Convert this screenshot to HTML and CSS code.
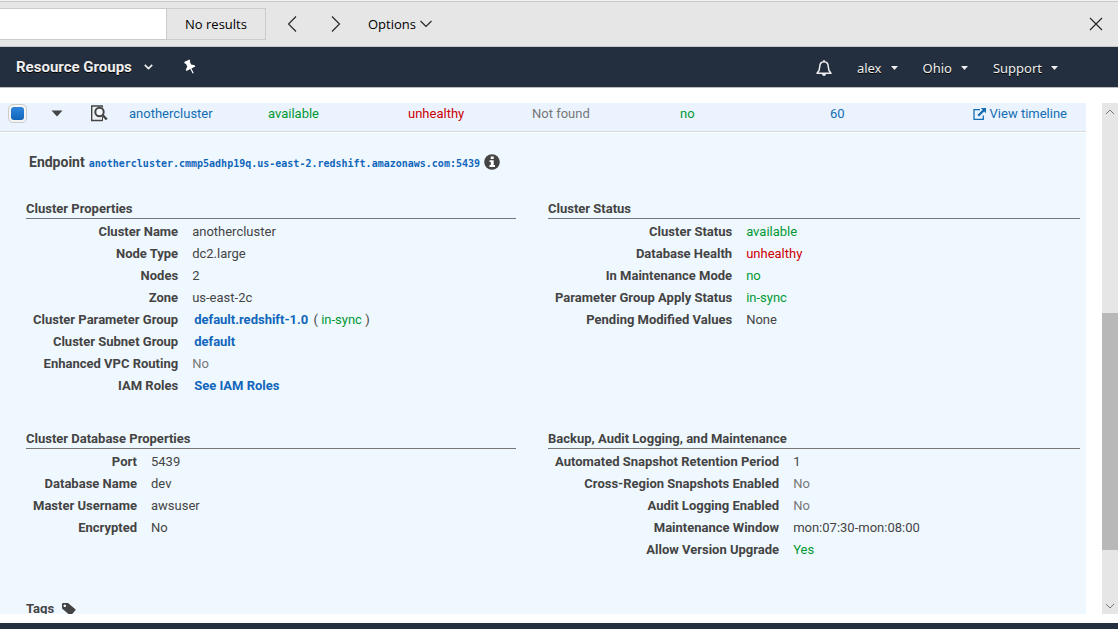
FILE: index.html
```html
<!DOCTYPE html>
<html lang="en">
<head>
<meta charset="utf-8">
<title>Redshift clusters</title>
<link rel="stylesheet" href="styles.css">
</head>
<body>
<form class="findbar" role="search">
  <input class="find-input" type="text" aria-label="Find on page">
  <output class="find-result">No results</output>
  <button class="find-btn find-prev" type="button" aria-label="Previous"><svg width="10" height="18" viewBox="0 0 10 18"><path d="M9 1.5 1.5 9 9 16.5"/></svg></button>
  <button class="find-btn find-next" type="button" aria-label="Next"><svg width="10" height="18" viewBox="0 0 10 18"><path d="M1 1.500 8.500 9 1 16.500"/></svg></button>
  <button class="find-btn find-options" type="button">Options <svg width="12" height="8" viewBox="0 0 12 8"><path d="M.5 1 6 6.500 11.500 1"/></svg></button>
  <button class="find-btn find-close" type="button" aria-label="Close"><svg width="14" height="14" viewBox="0 0 14 14"><path d="m1 1 12 12M13 1 1 13"/></svg></button>
</form>

<nav class="nav">
  <button class="nav-btn nav-groups" type="button">Resource Groups <svg width="9" height="6" viewBox="0 0 9 6"><path d="M.8.8 4.500 4.500 8.200.8" fill="none" stroke="currentColor" stroke-width="1.700"/></svg></button>
  <button class="nav-btn nav-pin" type="button" aria-label="Pin"><svg width="14" height="16" viewBox="0 0 14 16"><path transform="rotate(-27 7 8)" fill="#fff" d="M4 1h6v2H9.200v3.300L12 8.500V10H7.600v5H6.400v-5H2V8.500l2.800-2.200V3H4Z"/></svg></button>
  <span class="nav-space"></span>
  <button class="nav-btn nav-bell" type="button" aria-label="Notifications"><svg width="16" height="18" viewBox="0 0 16 18"><path d="M8 1v1.500M1 14.200c2-1.800 2.700-3.200 2.700-6.200C3.700 4.500 5.200 2.700 8 2.700S12.300 4.500 12.300 8c0 3 .7 4.400 2.700 6.200Z" fill="none" stroke="currentColor" stroke-width="1.500" stroke-linejoin="round"/><path d="M6 15h4c0 2.500-4 2.500-4 0Z" fill="currentColor"/></svg></button>
  <button class="nav-btn" type="button">alex <svg width="7" height="4" viewBox="0 0 7 4"><path d="M0 0h7L3.500 4Z" fill="currentColor"/></svg></button>
  <button class="nav-btn" type="button">Ohio <svg width="7" height="4" viewBox="0 0 7 4"><path d="M0 0h7L3.500 4Z" fill="currentColor"/></svg></button>
  <button class="nav-btn" type="button">Support <svg width="7" height="4" viewBox="0 0 7 4"><path d="M0 0h7L3.500 4Z" fill="currentColor"/></svg></button>
</nav>

<main class="console">
  <div class="content">
    <table class="clusters">
      <colgroup><col class="c-check"><col class="c-icon"><col class="c-icon"><col class="c-name"><col class="c-status"><col class="c-health"><col class="c-found"><col class="c-maint"><col class="c-count"><col></colgroup>
      <tbody>
        <tr>
          <td><input class="check" type="checkbox" checked aria-label="Select anothercluster"></td>
          <td><button class="icon-btn" type="button" aria-label="Collapse"><svg width="12" height="7" viewBox="0 0 12 7"><path d="M.5.5h11L6 6.500Z" fill="#444"/></svg></button></td>
          <td><button class="icon-btn" type="button" aria-label="Inspect"><svg width="18" height="17" viewBox="0 0 18 17"><path d="M12.500 1H1.700v14.500h10.800" fill="#eef2f3" stroke="#444" stroke-width="1.400"/><path d="M12.500.5v2M12.500 12v4" stroke="#444"/><circle cx="9.500" cy="7" r="4.200" fill="#f3f7fa" stroke="#444" stroke-width="2"/><path d="m12.500 10 4.300 4.500" stroke="#444" stroke-width="2.500"/></svg></button></td>
          <td><a href="#">anothercluster</a></td>
          <td class="ok">available</td>
          <td class="bad">unhealthy</td>
          <td class="muted">Not found</td>
          <td class="ok">no</td>
          <td><a href="#">60</a></td>
          <td class="timeline"><a href="#"><svg width="13" height="12" viewBox="0 0 13 12"><path d="M7 1.700H1v9.600h9.300V7.500" fill="none" stroke="currentColor" stroke-width="1.300"/><path d="M7.800 0H13v5.200l-1.800-1.800L6 8.600 4.400 7l5.200-5.200Z" fill="currentColor"/></svg> View timeline</a></td>
        </tr>
      </tbody>
    </table>

    <section class="details">
      <div class="endpoint">
        <strong>Endpoint</strong>
        <a href="#">anothercluster.cmmp5adhp19q.us-east-2.redshift.amazonaws.com:5439</a>
        <svg width="16" height="16" viewBox="0 0 16 16"><circle cx="8" cy="8" r="7.800" fill="#444"/><path d="M6.700 2.500h3v2.400h-3ZM5.500 6.200h4.200v4.900H11V13H5.500v-1.900h1.300V8H5.500Z" fill="#fff"/></svg>
      </div>

      <div class="panels">
        <section>
          <h2>Cluster Properties</h2>
          <dl>
            <dt>Cluster Name</dt><dd>anothercluster</dd>
            <dt>Node Type</dt><dd>dc2.large</dd>
            <dt>Nodes</dt><dd>2</dd>
            <dt>Zone</dt><dd>us-east-2c</dd>
            <dt>Cluster Parameter Group</dt><dd><a href="#">default.redshift-1.0</a> ( <span class="ok">in-sync</span> )</dd>
            <dt>Cluster Subnet Group</dt><dd><a href="#">default</a></dd>
            <dt>Enhanced VPC Routing</dt><dd class="muted">No</dd>
            <dt>IAM Roles</dt><dd><a href="#">See IAM Roles</a></dd>
          </dl>
        </section>
        <section>
          <h2>Cluster Status</h2>
          <dl>
            <dt>Cluster Status</dt><dd class="ok">available</dd>
            <dt>Database Health</dt><dd class="bad">unhealthy</dd>
            <dt>In Maintenance Mode</dt><dd class="ok">no</dd>
            <dt>Parameter Group Apply Status</dt><dd class="ok">in-sync</dd>
            <dt>Pending Modified Values</dt><dd>None</dd>
          </dl>
        </section>
        <section>
          <h2>Cluster Database Properties</h2>
          <dl>
            <dt>Port</dt><dd>5439</dd>
            <dt>Database Name</dt><dd>dev</dd>
            <dt>Master Username</dt><dd>awsuser</dd>
            <dt>Encrypted</dt><dd>No</dd>
          </dl>
        </section>
        <section>
          <h2>Backup, Audit Logging, and Maintenance</h2>
          <dl>
            <dt>Automated Snapshot Retention Period</dt><dd>1</dd>
            <dt>Cross-Region Snapshots Enabled</dt><dd class="muted">No</dd>
            <dt>Audit Logging Enabled</dt><dd class="muted">No</dd>
            <dt>Maintenance Window</dt><dd>mon:07:30-mon:08:00</dd>
            <dt>Allow Version Upgrade</dt><dd class="ok">Yes</dd>
          </dl>
        </section>
      </div>

      <div class="tags"><strong>Tags</strong> <svg width="14" height="13" viewBox="0 0 14 13"><path fill="#444" fill-rule="evenodd" d="M0 1Q0 0 1 0h5l7.400 6.300q.5.500 0 1L9 12.400q-.5.500-1 0L0 5.500ZM2.800 1.500a1.300 1.300 0 1 0 .01 0Z"/></svg></div>
    </section>
  </div>

  <div class="scrollbar" aria-hidden="true">
    <svg width="10" height="6" viewBox="0 0 10 6"><path d="M1 5 5 1l4 4"/></svg>
    <div class="thumb"></div>
    <svg class="down" width="10" height="6" viewBox="0 0 10 6"><path d="m1 1 4 4 4-4"/></svg>
  </div>
</main>
<footer class="footer"></footer>
</body>
</html>
```
FILE: styles.css
```css
* { box-sizing: border-box; }

body {
  margin: 0;
  height: 100vh;
  display: flex;
  flex-direction: column;
  overflow: hidden;
  background: #fff;
  color: #444;
  font: 13px/20px Roboto, sans-serif;
}

svg { display: block; flex: none; }
a { color: #146eb4; text-decoration: none; }
button { padding: 0; border: 0; background: none; color: inherit; font: inherit; }

.ok { color: #093; }
.bad { color: #c00; }
.muted { color: #777; }

/* Find bar */
.findbar {
  display: flex;
  align-items: center;
  height: 47px;
  flex: none;
  border-top: 1px solid #f2f2f2;
  border-bottom: 1px solid #c8c8c8;
  box-shadow: inset 0 1px #c8c8c8;
  background: #e6e6e6;
  color: #000;
  font: 13px/20px "Open Sans", sans-serif;
}
.find-input {
  width: 167px;
  height: 32px;
  border: 1px solid #ccc;
  border-left: 0;
  background: #fff;
}
.find-result {
  width: 99px;
  height: 32px;
  border: 1px solid #ccc;
  border-left: 0;
  line-height: 30px;
  text-align: center;
}
.find-btn { display: flex; align-items: center; gap: 4px; }
.find-btn svg { fill: none; stroke: #222; stroke-width: 1.1; }
.find-prev { margin-left: 21px; }
.find-next { margin-left: 34px; }
.find-options { margin-left: 27px; }
.find-close { margin-left: auto; margin-right: 15px; }

/* Navigation */
.nav {
  display: flex;
  align-items: center;
  height: 41px;
  flex: none;
  padding: 0 60px 0 16px;
  border-bottom: 1px solid #bbb;
  background: #232f3e;
  color: #eee;
  font: 13px/20px "Noto Sans", sans-serif;
}
.nav-btn { display: flex; align-items: center; gap: 9px; margin-left: 25px; padding-top: 2px; text-shadow: 0 1px #000; }
.nav-groups { margin-left: 0; padding-top: 0; gap: 12px; font: bold 15px/20px Roboto, sans-serif; }
.nav-pin { margin-left: 30px; padding-top: 0; }
.nav-space { flex: 1; }

/* Cluster list */
.console {
  display: flex;
  gap: 16px;
  flex: 1;
  min-height: 0;
  padding: 15px 0 9px;
}
.content { flex: 1; min-width: 0; overflow: hidden; background: #f0f8ff; }
.clusters {
  width: 100%;
  table-layout: fixed;
  border-collapse: separate;
  border-spacing: 0;
  background: #eaf3fe;
  border-bottom: 1px solid #fff;
}
.clusters td {
  height: 29px;
  padding: 0 0 7px;
  border-bottom: 1px solid #d5dbe0;
  white-space: nowrap;
}
.clusters td:first-child { padding-left: 8px; }
.c-check { width: 51px; }
.c-icon { width: 39px; }
.c-name { width: 139px; }
.c-status { width: 140px; }
.c-health { width: 124px; }
.c-found { width: 148px; }
.c-maint { width: 150px; }
.c-count { width: 100px; }
.check {
  appearance: none;
  display: block;
  width: 19px;
  height: 19px;
  margin: 0;
  padding: 2px;
  border: 1px solid #ccc;
  border-radius: 5px;
  background: #f5f5f5;
}
.check:checked::before {
  content: "";
  display: block;
  height: 13px;
  border-radius: 3px;
  background: linear-gradient(#2e86dc, #1166bb);
}
.icon-btn { display: block; }
.clusters .timeline { padding-right: 19px; }
.timeline a { display: flex; align-items: center; justify-content: flex-end; gap: 4px; }

/* Cluster details */
.details { padding: 19px 6px 0 26px; }
.endpoint { display: flex; align-items: baseline; gap: 4px; padding-left: 3px; font-size: 14px; }
.endpoint a { font: bold 10px/16px "DejaVu Sans Mono", monospace; color: #1166bb; }
.endpoint svg { align-self: center; }
.panels {
  display: grid;
  grid-template-columns: 490fr 532fr;
  gap: 33px 32px;
  margin-top: 28px;
}
.panels h2 { margin: 0; border-bottom: 1px solid #777; font-size: 13px; line-height: 18px; }
.panels dl {
  display: grid;
  grid-template-columns: max-content 1fr;
  column-gap: 14px;
  margin: 0;
  padding: 2px 0 0 7px;
  line-height: 22px;
}
.panels dt { font-weight: bold; text-align: right; }
.panels dd { margin: 0; }
.panels a { margin: 0 2px; color: #1166bb; font-weight: bold; }
.tags { display: flex; align-items: center; gap: 8px; margin-top: 39px; line-height: 18px; }

/* Scrollbar */
.scrollbar {
  display: grid;
  grid-template-rows: 17px 193fr 237fr 47fr 17px;
  width: 16px;
  background: #e6e6e6;
}
.scrollbar svg { grid-row: 1; place-self: center; fill: none; stroke: #777; }
.scrollbar .down { grid-row: 5; }
.thumb { grid-row: 3; background: #b8b8b8; }

.footer { height: 6px; flex: none; background: #232f3e; }
```
